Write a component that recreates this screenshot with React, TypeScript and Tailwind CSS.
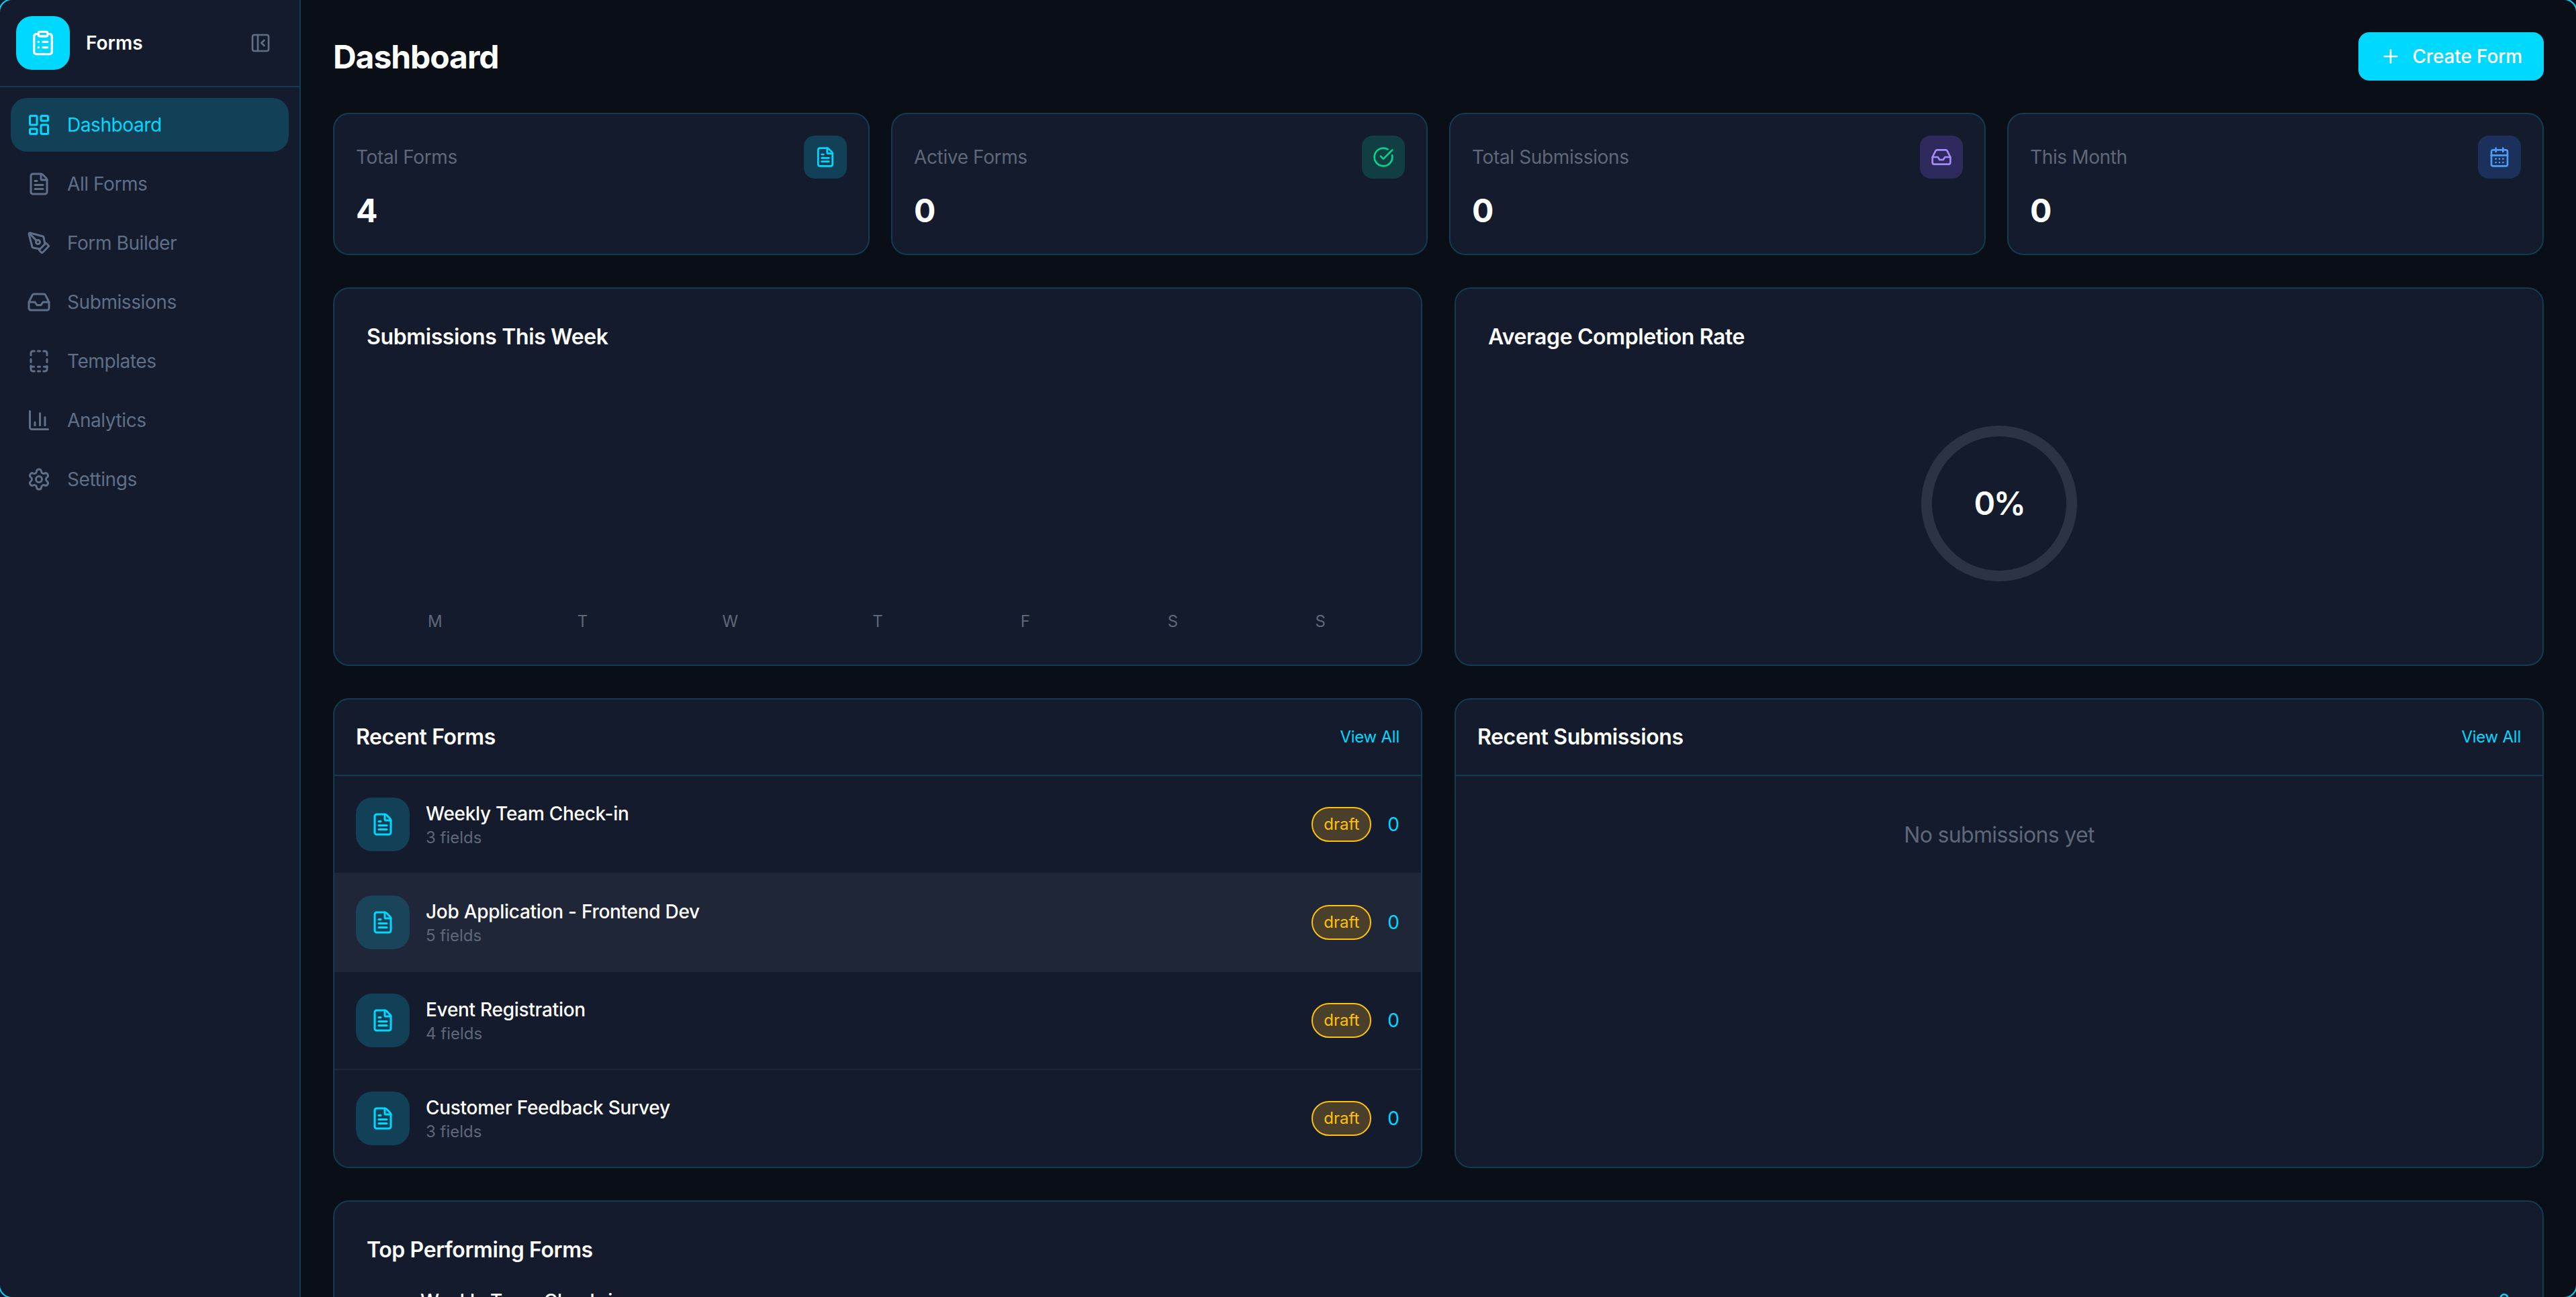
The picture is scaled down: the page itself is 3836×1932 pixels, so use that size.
import {
  CalendarDays,
  ChartColumn,
  CircleCheckBig,
  ClipboardList,
  FileText,
  Inbox,
  LayoutDashboard,
  PanelLeftClose,
  PenTool,
  Plus,
  Settings,
  type LucideIcon,
} from 'lucide-react'
import type { SVGProps } from 'react'

function TemplatesIcon(props: SVGProps<SVGSVGElement>) {
  return (
    <svg viewBox="0 0 24 24" fill="none" stroke="currentColor" strokeWidth="2" strokeLinecap="round" strokeLinejoin="round" {...props}>
      <path d="M4 6V4a2 2 0 0 1 2-2h1.5" />
      <path d="M11 2h2" />
      <path d="M16.5 2H18a2 2 0 0 1 2 2v2" />
      <path d="M4 10v3" />
      <path d="M20 10v3" />
      <path d="M4 16.5V20a2 2 0 0 0 2 2h1.5" />
      <path d="M4 17.5h3" />
      <path d="M11 17.5h2" />
      <path d="M17 17.5h3" />
      <path d="M11 22h2" />
      <path d="M16.5 22H18a2 2 0 0 0 2-2v-3" />
    </svg>
  )
}

const navItems: { label: string; icon: LucideIcon | typeof TemplatesIcon; active?: boolean }[] = [
  { label: 'Dashboard', icon: LayoutDashboard, active: true },
  { label: 'All Forms', icon: FileText },
  { label: 'Form Builder', icon: PenTool },
  { label: 'Submissions', icon: Inbox },
  { label: 'Templates', icon: TemplatesIcon },
  { label: 'Analytics', icon: ChartColumn },
  { label: 'Settings', icon: Settings },
]

const stats = [
  { label: 'Total Forms', value: '4', icon: FileText, box: 'bg-[#114057]', color: 'text-[#00d9ff]' },
  { label: 'Active Forms', value: '0', icon: CircleCheckBig, box: 'bg-[#113e43]', color: 'text-[#00d68f]' },
  { label: 'Total Submissions', value: '0', icon: Inbox, box: 'bg-[#2f2a5e]', color: 'text-[#a78bfa]' },
  { label: 'This Month', value: '0', icon: CalendarDays, box: 'bg-[#1b315c]', color: 'text-[#4f9cf9]' },
]

const days = ['M', 'T', 'W', 'T', 'F', 'S', 'S']

const recentForms = [
  { name: 'Weekly Team Check-in', fields: '3 fields' },
  { name: 'Job Application - Frontend Dev', fields: '5 fields', hover: true },
  { name: 'Event Registration', fields: '4 fields' },
  { name: 'Customer Feedback Survey', fields: '3 fields' },
]

const cardClass = 'rounded-[24px] border-2 border-[#123c51] bg-[#141b2d]'
const headingClass = 'text-[32px] leading-12 font-semibold tracking-[-0.012em] text-white'

function Sidebar() {
  return (
    <aside className="flex w-[448px] shrink-0 flex-col border-r-2 border-[#123c51] bg-[#141b2d]">
      <div className="flex items-center justify-between border-b-2 border-[#123c51] p-6">
        <div className="flex items-center gap-6">
          <div className="flex h-20 w-20 items-center justify-center rounded-[24px] bg-[#00d9ff]">
            <ClipboardList className="h-10 w-10 text-white" />
          </div>
          <span className="text-[28px] leading-10 font-semibold text-white">Forms</span>
        </div>
        <PanelLeftClose className="mr-[18px] h-8 w-8 text-[#5f6f88]" />
      </div>
      <nav className="flex flex-col gap-2 p-4">
        {navItems.map((item) => (
          <div
            key={item.label}
            className={`flex h-20 items-center gap-6 rounded-[24px] px-6 text-[28px] tracking-[-0.015em] ${
              item.active ? 'bg-[#114057] text-[#00d9ff]' : 'text-[#5f6f88]'
            }`}
          >
            <item.icon className="h-9 w-9" />
            <span>{item.label}</span>
          </div>
        ))}
      </nav>
    </aside>
  )
}

function RecentFormRow({ name, fields, hover }: { name: string; fields: string; hover?: boolean }) {
  return (
    <div className={`flex items-center justify-between border-b-2 border-[#1f2638] p-8 last:border-b-0 ${hover ? 'bg-[#1f2638]' : ''}`}>
      <div className="flex items-center gap-6">
        <div className={`flex h-20 w-20 items-center justify-center rounded-[24px] ${hover ? 'bg-[#1a4459]' : 'bg-[#114057]'}`}>
          <FileText className="h-9 w-9 text-[#00d9ff]" />
        </div>
        <div>
          <div className="text-[28px] leading-10 font-medium tracking-[-0.01em] text-white">{name}</div>
          <div className="text-2xl leading-8 text-[#5f6878]">{fields}</div>
        </div>
      </div>
      <div className="flex items-center gap-6">
        <span className="rounded-full border-2 border-[#ffc107] bg-[#4a3f2a] px-4 py-2 text-2xl leading-8 text-[#ffc107]">draft</span>
        <span className="text-[28px] leading-10 text-[#00d9ff]">0</span>
      </div>
    </div>
  )
}

export default function App() {
  return (
    <div className="relative flex h-[1932px] overflow-hidden bg-[#0a0e17] [font-family:Inter,sans-serif]">
      <Sidebar />
      <main className="min-w-0 flex-1 p-12">
        <div className="mb-12 flex items-center justify-between">
          <h1 className="pt-[2px] text-5xl leading-16 font-bold tracking-[-0.022em] text-white">Dashboard</h1>
          <button className="flex items-center gap-4 rounded-2xl bg-[#00d9ff] px-8 py-4 text-[28px] leading-10 font-medium tracking-[-0.005em] text-white">
            <Plus className="h-8 w-8" />
            Create Form
          </button>
        </div>

        <div className="mb-12 grid grid-cols-4 gap-8">
          {stats.map((stat) => (
            <div key={stat.label} className={`${cardClass} p-8`}>
              <div className="mb-4 flex items-center justify-between">
                <span className="text-[28px] leading-10 tracking-[-0.013em] text-[#5f6878]">{stat.label}</span>
                <div className={`flex h-16 w-16 items-center justify-center rounded-2xl ${stat.box}`}>
                  <stat.icon className={`h-8 w-8 ${stat.color}`} />
                </div>
              </div>
              <div className="text-5xl leading-16 font-bold text-white">{stat.value}</div>
            </div>
          ))}
        </div>

        <div className="mb-12 grid grid-cols-2 gap-12">
          <div className={`${cardClass} p-12`}>
            <h2 className={`mb-8 ${headingClass}`}>Submissions This Week</h2>
            <div className="flex h-96 items-end gap-4">
              {days.map((day, i) => (
                <div key={i} className="flex-1 text-center text-2xl leading-8 text-[#5f6878]">
                  {day}
                </div>
              ))}
            </div>
          </div>
          <div className={`${cardClass} p-12`}>
            <h2 className={`mb-8 ${headingClass}`}>Average Completion Rate</h2>
            <div className="flex h-96 items-center justify-center">
              <div className="relative h-[232px] w-[232px]">
                <svg viewBox="0 0 232 232" className="h-full w-full">
                  <circle cx="116" cy="116" r="108" fill="none" stroke="#2a3444" strokeWidth="16" />
                </svg>
                <div className="absolute inset-0 flex items-center justify-center text-5xl font-semibold tracking-[-0.05em] text-white">0%</div>
              </div>
            </div>
          </div>
        </div>

        <div className="mb-12 grid grid-cols-2 gap-12">
          <div className={cardClass}>
            <div className="flex items-center justify-between border-b-2 border-[#123c51] p-8">
              <h2 className={headingClass}>Recent Forms</h2>
              <span className="text-2xl leading-8 tracking-[-0.01em] text-[#00d9ff]">View All</span>
            </div>
            {recentForms.map((form) => (
              <RecentFormRow key={form.name} {...form} />
            ))}
          </div>
          <div className={cardClass}>
            <div className="flex items-center justify-between border-b-2 border-[#123c51] p-8">
              <h2 className={headingClass}>Recent Submissions</h2>
              <span className="text-2xl leading-8 tracking-[-0.01em] text-[#00d9ff]">View All</span>
            </div>
            <div className="py-16 text-center text-[32px] leading-12 tracking-[-0.021em] text-[#5f6878]">No submissions yet</div>
          </div>
        </div>

        <div className={`${cardClass} p-12`}>
          <h2 className={`mb-8 ${headingClass}`}>Top Performing Forms</h2>
          <div className="flex items-center justify-between pl-20">
            <span className="text-[28px] leading-10 font-medium tracking-[-0.01em] text-white">Weekly Team Check-in</span>
            <span className="text-[28px] leading-10 text-[#00d9ff]">0</span>
          </div>
        </div>
      </main>
      {/* window frame, only its corners fall inside the page */}
      <div className="pointer-events-none absolute inset-[-2px] rounded-[20px] border-2 border-[#00d9ff]" />
    </div>
  )
}
